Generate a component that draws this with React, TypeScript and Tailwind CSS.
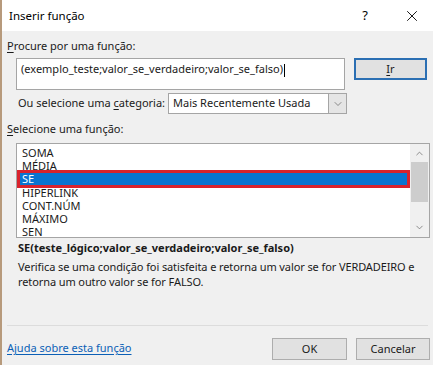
import { ChevronDown, ChevronUp, X } from "lucide-react";

const funcs = ["SOMA", "MÉDIA", "SE", "HIPERLINK", "CONT.NÚM", "MÁXIMO", "SEN"];

const App = () => {
  return (
    <div
      className="w-[433px] h-[365px] bg-[#f0f0f0] border-l-2 border-[#b79a7c] flex flex-col text-[11px] text-[#1a1a1a] overflow-hidden"
      style={{ fontFamily: '"Noto Sans", "Open Sans", sans-serif' }}
    >
      <div className="h-[31px] bg-white flex items-center pl-[7px] shrink-0">
        <span className="text-[11.5px] text-black">Inserir função</span>
        <span className="ml-auto text-[13px] text-black mr-[35px]">?</span>
        <X size={18} strokeWidth={1.2} className="mr-[12px] text-black" />
      </div>

      <div className="pl-[5px] pr-[5px] flex flex-col whitespace-nowrap">
        <div className="mt-[7px] h-[16px] leading-[16px]">
          <span className="underline underline-offset-2">P</span>rocure por uma função:
        </div>

        <div className="flex mt-[4px] pl-[9px]">
          <div className="w-[329px] h-[32px] bg-white border border-[#a5a5a5] pl-[4px] pt-[2px] leading-[16px]">
            (exemplo_teste;valor_se_verdadeiro;valor_se_falso)
            <span className="inline-block w-px h-[13px] bg-black align-middle ml-px" />
          </div>
          <button className="ml-[9px] w-[73px] h-[22px] bg-[#e1e1e1] border-2 border-[#2b6fb3] leading-[16px]">
            <span className="underline underline-offset-2">I</span>r
          </button>
        </div>

        <div className="flex items-center mt-[3px] pl-[11px]">
          <span className="w-[150px]">
            Ou selecione uma <span className="underline underline-offset-2">c</span>ategoria:
          </span>
          <div className="w-[179px] h-[21px] bg-white border border-[#a5a5a5] flex items-center pl-[4px]">
            <span>Mais Recentemente Usada</span>
            <div className="ml-auto w-[18px] h-full bg-[#e5e5e5] border-l border-[#a5a5a5] flex items-center justify-center">
              <ChevronDown size={12} strokeWidth={1.3} className="text-[#555]" />
            </div>
          </div>
        </div>

        <div className="mt-[7px] h-[16px] leading-[16px]">
          <span className="underline underline-offset-2">S</span>elecione uma função:
        </div>

        <div className="ml-[9px] mt-[6px] w-[414px] h-[95px] bg-white border border-[#a5a5a5] flex">
          <div className="flex-1 flex flex-col pt-[2px]">
            {funcs.map((f) =>
              f === "SE" ? (
                <div
                  key={f}
                  className="h-[12px] my-[1px] mx-[3px] outline-[3px] outline-[#d9232d] bg-[#0a74d0] text-white leading-[12px] pl-[2px]"
                >
                  {f}
                </div>
              ) : (
                <div key={f} className="h-[13px] leading-[13px] pl-[5px]">
                  {f}
                </div>
              )
            )}
          </div>
          <div className="w-[19px] h-full bg-[#f0f0f0] flex flex-col items-center">
            <ChevronUp size={11} strokeWidth={1.5} className="text-[#606060] mt-[4px]" />
            <div className="w-[17px] h-[40px] bg-[#cdcdcd] mt-[3px]" />
            <ChevronDown size={11} strokeWidth={1.5} className="text-[#606060] mt-auto mb-[4px]" />
          </div>
        </div>

        <div className="pl-[11px] mt-[2px] font-bold leading-[16px] h-[16px]">
          SE(teste_lógico;valor_se_verdadeiro;valor_se_falso)
        </div>
        <div className="pl-[11px] mt-[3px] leading-[15px] whitespace-normal tracking-[-0.1px]">
          Verifica se uma condição foi satisfeita e retorna um valor se for VERDADEIRO e retorna um outro valor se for FALSO.
        </div>
      </div>

      <div className="mt-auto mx-[5px] border-t border-[#dcdcdc]" />
      <div className="flex items-start h-[39px] pt-[12px] pl-[5px] pr-[3px] shrink-0">
        <a className="text-[#0b5fb6] underline underline-offset-2 leading-[16px] mt-[2px]">Ajuda sobre esta função</a>
        <button className="ml-auto w-[75px] h-[22px] bg-[#e1e1e1] border border-[#adadad]">OK</button>
        <button className="ml-[9px] w-[74px] h-[22px] bg-[#e1e1e1] border border-[#adadad]">Cancelar</button>
      </div>
    </div>
  );
};

export default App;
